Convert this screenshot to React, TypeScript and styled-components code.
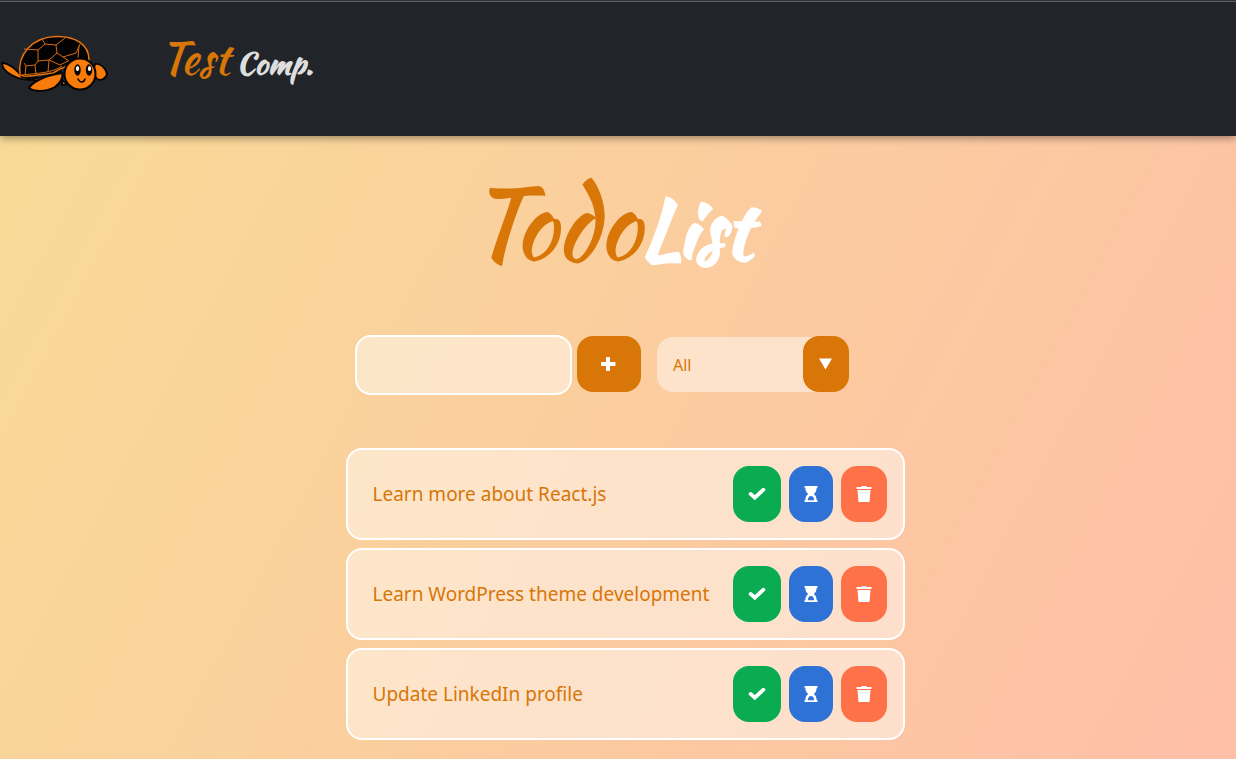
import React, { useState } from 'react';
import styled, { createGlobalStyle } from 'styled-components';

const GlobalStyle = createGlobalStyle`
  *, *::before, *::after { box-sizing: border-box; }
  body {
    margin: 0;
    min-height: 100vh;
    font-family: "Segoe UI", "Noto Sans", sans-serif;
    background: linear-gradient(118deg, #f8dc96 0%, #ffbba9 112%) fixed;
  }
`;

const script = '"Kaushan Script", Lato, sans-serif';

const Header = styled.header`
  display: flex;
  align-items: flex-start;
  gap: 50px;
  height: 136px;
  padding-top: 33px;
  background: #212529;
  border-top: 1px solid #2f3337;
  box-shadow: inset 0 1px #5c5f62, 0 2px 8px rgba(0, 0, 0, 0.4);
`;

const Brand = styled.a`
  font-family: ${script};
  font-size: 30px;
  font-weight: 700;
  line-height: 48px;
  color: #dedede;
  text-decoration: none;
  white-space: nowrap;
`;

const BrandAccent = styled.span`
  font-size: 44px;
  font-weight: 400;
  color: #d87607;
`;

const Main = styled.main`
  display: flex;
  flex-direction: column;
  align-items: center;
  padding: 24px 0 16px 14px;
`;

const Title = styled.h1`
  margin: 0 30px 0 0;
  font-family: ${script};
  font-weight: 700;
  font-size: 80px;
  line-height: 128px;
  color: #fff;
`;

const TitleAccent = styled.span`
  font-size: 96px;
  font-weight: 400;
  color: #d87607;
`;

const Controls = styled.form`
  display: flex;
  align-items: center;
  margin: 42px 46px 0 0;
`;

const TaskInput = styled.input`
  width: 217px;
  height: 60px;
  padding: 0 16px;
  border: 2px solid #fff;
  border-radius: 16px;
  background: rgba(255, 255, 255, 0.45);
  color: #d87607;
  font: inherit;
  font-size: 20px;
  outline: none;
`;

const Button = styled.button<{ $bg: string; $width: number }>`
  display: flex;
  flex: none;
  align-items: center;
  justify-content: center;
  width: ${(p) => p.$width}px;
  height: 56px;
  padding: 0;
  border: 0;
  border-radius: 16px;
  background: ${(p) => p.$bg};
  color: #fff;
  cursor: pointer;
`;

const AddButton = styled(Button)`
  margin: 0 16px 2px 5px;
`;

const SelectBox = styled.div`
  position: relative;
  display: flex;
  align-items: flex-end;
  width: 192px;
  height: 56px;
  margin-bottom: 2px;
`;

const Select = styled.select`
  appearance: none;
  width: 176px;
  height: 55px;
  padding: 0 16px;
  border: 0;
  border-radius: 16px;
  background: rgba(255, 255, 255, 0.45);
  color: #d87607;
  font: inherit;
  font-size: 16px;
  outline: none;
`;

const Arrow = styled.span`
  position: absolute;
  top: 0;
  right: 0;
  display: flex;
  align-items: center;
  justify-content: center;
  width: 46px;
  height: 56px;
  border-radius: 16px;
  background: #d87607;
  color: #fff;
  pointer-events: none;
`;

const List = styled.ul`
  display: flex;
  flex-direction: column;
  gap: 8px;
  width: 559px;
  max-width: 100%;
  margin: 53px 0 0;
  padding: 0;
  list-style: none;
`;

const Item = styled.li`
  display: flex;
  align-items: center;
  gap: 8px;
  padding: 16px 16px 16px 25px;
  min-height: 92px;
  border: 2px solid #fff;
  border-radius: 16px;
  background: rgba(255, 255, 255, 0.45);
`;

const ItemText = styled.span`
  flex: 1;
  min-width: 0;
  white-space: nowrap;
  font-size: 19px;
  line-height: 28px;
  color: #d87607;
`;

const Plus = () => (
  <svg width="16" height="16" viewBox="0 0 16 16" aria-hidden="true">
    <path fill="currentColor" d="M5 1.500Q5 1 5.500 1H8.500Q9 1 9 1.500V6H14Q14.500 6 14.500 6.500V9.500Q14.500 10 14 10H9V14.500Q9 15 8.500 15H5.500Q5 15 5 14.500V10H0.500Q0 10 0 9.500V6.500Q0 6 0.500 6H5Z" />
  </svg>
);

const Check = () => (
  <svg width="18" height="14" viewBox="0 0 18 14" aria-hidden="true">
    <path fill="none" stroke="currentColor" strokeWidth="3.800" strokeLinecap="round" strokeLinejoin="miter" d="M2.600 6.900L6.800 10.700L15.400 2.700" />
  </svg>
);

const Hourglass = () => (
  <svg width="14" height="16" viewBox="0 0 14 16" aria-hidden="true">
    <path
      fill="currentColor"
      fillRule="evenodd"
      d="M0.500 0H13.500V1.800H12.700C12.500 4.600 11.800 6.600 9.800 8C11.800 9.400 12.500 11.200 12.700 14.200H13.500V16H0.500V14.200H1.300C1.500 11.200 2.200 9.400 4.200 8C2.200 6.600 1.500 4.600 1.300 1.800H0.500ZM3.800 14.200H10.200C10 11.600 8.800 10 7 10C5.200 10 4 11.600 3.800 14.200Z"
    />
  </svg>
);

const Trash = () => (
  <svg width="16" height="16" viewBox="0 0 16 16" aria-hidden="true">
    <path fill="currentColor" d="M5.200 0.900L6 0H10L10.800 0.900H15.500V2.900H0.500V0.900ZM1.500 4H14.500L13.600 15.200Q13.500 16 12.700 16H3.300Q2.500 16 2.400 15.200Z" />
  </svg>
);

const Turtle = () => (
  <svg width="110" height="64" viewBox="0 0 110 64" role="img" aria-label="Turtle">
    <g stroke="#050505" strokeWidth="1.8" strokeLinejoin="round" strokeLinecap="round">
      <path d="M62 46 L67 50 L62 51Z" fill="#f97b09" />
      <path d="M2 29 C8 29 17 35 22 43 L37 44 L31 46 C19 46 2 39 2 29Z" fill="#f97b09" />
      <path d="M24 43 C35 47 49 42 61 37 L62 44 C50 47 33 48 24 43Z" fill="#e8750f" />
      <path d="M95 30 C100 29 106 34 107 40 C106 45 101 47 97 45 L93 39Z" fill="#f97b09" />
    </g>
    <path d="M20 41 C17 20 33 3 56 2.500 C76 2 89 11 89 26 L87 31 C75 27 61 34 53 39 C41 40 31 43 24 42Z" fill="#020202" stroke="#e8730d" strokeWidth="1.500" />
    <g fill="none" stroke="#d96a0c" strokeWidth="1">
      <path d="M24 15 L38 16 L45 10 L42 5 M45 10 L56 11 L65 4 M56 11 L57 19 L49 26 L38 27 L38 16 M57 19 L63 23 L76 19 L80 10 M49 26 L48 38 M38 27 L35 31 L36 40 M35 31 L26 32 L24 29 M26 32 L25 41 M49 26 L60 31 L68 27 M63 23 L69 27 M79 12 L78 24 M22 41 C39 39 52 39 62 32" />
    </g>
    <path d="M29 54 C32 48 46 41 62 39 C64 44 59 50 55 53 C46 58 34 58 29 54Z" fill="#f97b09" stroke="#050505" strokeWidth="2" />
    <circle cx="80" cy="40" r="15.500" fill="#f97b09" stroke="#050505" strokeWidth="2" />
    <ellipse cx="77.500" cy="36" rx="3.200" ry="5.800" fill="#050505" />
    <ellipse cx="89" cy="36" rx="3.200" ry="5.800" fill="#050505" />
    <ellipse cx="77.500" cy="34.500" rx="1.600" ry="2.600" fill="#fff" />
    <ellipse cx="89.500" cy="34.500" rx="1.600" ry="2.600" fill="#fff" />
    <path d="M78 45 C80 49 84 49 85 45" fill="none" stroke="#050505" strokeWidth="1.500" strokeLinecap="round" />
  </svg>
);

const initial = ['Learn more about React.js', 'Learn WordPress theme development', 'Update LinkedIn profile'];

export default function App() {
  const [tasks, setTasks] = useState(initial);
  const [text, setText] = useState('');

  const add = (e: React.FormEvent) => {
    e.preventDefault();
    if (text.trim()) setTasks([...tasks, text.trim()]);
    setText('');
  };

  return (
    <>
      <GlobalStyle />
      <Header>
        <Turtle />
        <Brand href="#"><BrandAccent>Test</BrandAccent> Comp.</Brand>
      </Header>
      <Main>
        <Title><TitleAccent>Todo</TitleAccent>List</Title>
        <Controls onSubmit={add}>
          <TaskInput aria-label="New task" value={text} onChange={(e) => setText(e.target.value)} />
          <AddButton type="submit" aria-label="Add task" $bg="#d87607" $width={64}><Plus /></AddButton>
          <SelectBox>
            <Select aria-label="Filter tasks">
              <option>All</option>
              <option>Completed</option>
              <option>Pending</option>
            </Select>
            <Arrow aria-hidden="true">
              <svg width="14" height="12" viewBox="0 0 14 12"><path d="M0 0.500H13L6.500 11.500Z" fill="currentColor" /></svg>
            </Arrow>
          </SelectBox>
        </Controls>
        <List>
          {tasks.map((task, i) => (
            <Item key={i}>
              <ItemText>{task}</ItemText>
              <Button type="button" aria-label="Complete" $bg="#0bab51" $width={48}><Check /></Button>
              <Button type="button" aria-label="Pending" $bg="#2f72d6" $width={44}><Hourglass /></Button>
              <Button type="button" aria-label="Delete" $bg="#ff7148" $width={46} onClick={() => setTasks(tasks.filter((_, n) => n !== i))}><Trash /></Button>
            </Item>
          ))}
        </List>
      </Main>
    </>
  );
}
